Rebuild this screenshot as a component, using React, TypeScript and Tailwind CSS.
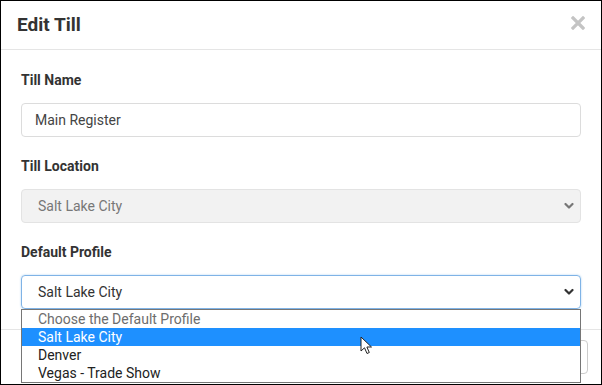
import React from "react";

function Chevron({ dark }: { dark?: boolean }) {
  return (
    <svg width="10" height="7" viewBox="0 0 10 7" className="absolute right-[6px] top-1/2 -translate-y-1/2">
      <path d="M1.5 1.5 L5 5 L8.5 1.5" fill="none" stroke={dark ? "#333" : "#777"} strokeWidth="2.2" strokeLinecap="round" strokeLinejoin="round" />
    </svg>
  );
}

function Label({ children }: { children: React.ReactNode }) {
  return <div className="h-5 leading-5 mb-[13px] text-[14px] font-bold text-[#333]">{children}</div>;
}

export default function App() {
  const options = ["Choose the Default Profile", "Salt Lake City", "Denver", "Vegas - Trade Show"];
  return (
    <div
      className="relative w-[602px] h-[385px] overflow-hidden bg-white border border-black"
      style={{ fontFamily: "Roboto, 'Liberation Sans', sans-serif" }}
    >
      <div className="h-[49px] flex items-center justify-between pl-4 pr-4 border-b border-[#e5e5e5]">
        <h1 className="text-[19px] font-bold text-[#333] mt-[1px]">Edit Till</h1>
        <svg width="14" height="14" viewBox="0 0 14 14" className="mt-[-4px]">
          <path d="M2 2 L12 12 M12 2 L2 12" stroke="#c4c4c4" strokeWidth="3.2" strokeLinecap="square" />
        </svg>
      </div>

      <div className="pt-[20px] pb-[20px] pl-5 pr-5">
        <Label>Till Name</Label>
        <div className="h-[34px] rounded-[4px] border border-[#dcdcdc] flex items-center pl-[13px] text-[14px] text-[#444] mb-[19px]">
          Main Register
        </div>

        <Label>Till Location</Label>
        <div className="relative h-[34px] rounded-[4px] border border-[#e3e3e3] bg-[#f2f2f2] flex items-center pl-[16px] text-[14px] text-[#777] mb-[19px]">
          Salt Lake City
          <Chevron />
        </div>

        <Label>Default Profile</Label>
        <div className="relative h-[34px] rounded-[4px] border border-[#7fb3e6] shadow-[0_0_2px_rgba(102,175,233,0.6)] flex items-center pl-[16px] text-[14px] text-[#333]">
          Salt Lake City
          <Chevron dark />
        </div>
      </div>

      <div className="border-t border-[#e5e5e5] flex justify-end pt-[10px] pr-[13px]">
        <button className="h-[34px] px-4 rounded-[4px] border border-[#ccc] bg-white text-[14px] text-[#333]">
          Cancel
        </button>
      </div>

      <ul className="absolute left-[20px] top-[308px] w-[560px] border border-[#767676] bg-white text-[14px] text-black">
        {options.map((o, i) => (
          <li
            key={o}
            className={
              "h-[18px] leading-[18px] pl-[16px] " +
              (i === 0 ? "text-[#6d6d6d]" : i === 1 ? "bg-[#1e90ff] text-white" : "text-[#222]")
            }
          >
            {o}
          </li>
        ))}
      </ul>

      <svg width="13" height="20" viewBox="0 0 13 20" className="absolute left-[359px] top-[335px]">
        <path d="M1 1 L1 15 L4.5 11.8 L7 17.5 L9.3 16.5 L6.9 11 L11.5 11 Z" fill="white" stroke="#222" strokeWidth="1" strokeLinejoin="round" />
      </svg>
    </div>
  );
}
